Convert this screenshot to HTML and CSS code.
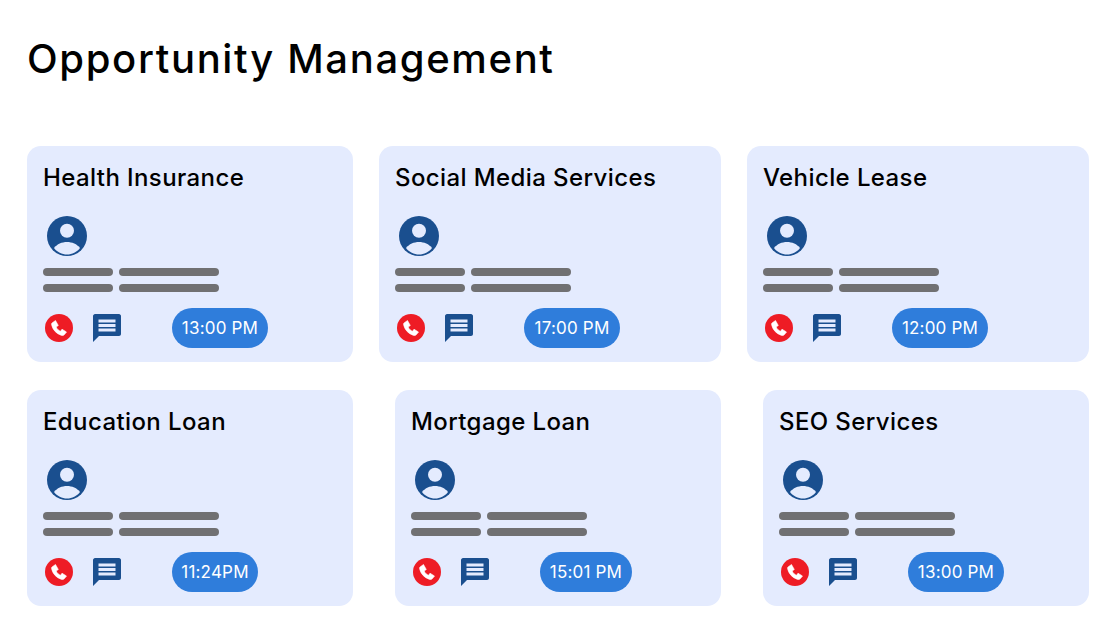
FILE: index.html
```html
<!DOCTYPE html>
<html lang="en">
<head>
<meta charset="utf-8">
<title>Opportunity Management</title>
<link rel="stylesheet" href="styles.css">
</head>
<body>
<svg class="defs" width="0" height="0" aria-hidden="true">
  <symbol id="avatar" viewBox="0 0 40 40">
    <circle cx="20" cy="20" r="20" fill="#1a4f8f"/>
    <circle cx="20" cy="14.700" r="7" fill="#e4ebfe"/>
    <path d="M7 32C10 28 15 26 20 26s10 2 13 6C30 36 25 38.500 20 38.500S10 36 7 32Z" fill="#e4ebfe"/>
  </symbol>
  <symbol id="phone" viewBox="0 0 28 28">
    <circle cx="14" cy="14" r="14" fill="#ee1c25"/>
    <path d="M7 9 10.500 6.500 13.300 11.500 11.200 13C12 15 13.500 16.500 15.500 17.300L17 15.200 21.500 18 19.500 20.500C18.500 21.800 17.300 21.600 16 21.200 11.500 19.800 8 16 6.800 11.500 6.500 10.500 6.300 9.700 7 9Z" fill="#fff" stroke="#fff" stroke-width=".6" stroke-linejoin="round"/>
  </symbol>
  <symbol id="chat" viewBox="0 0 28 28">
    <path d="M2 0h24c1 0 2 1 2 2v18c0 1-1 2-2 2H6l-6 6V2C0 1 1 0 2 0Z" fill="#1a4f8f"/>
    <path d="M5.500 5.500h17v3h-17zM5.500 10h17v3h-17zM5.500 14.500h17v3h-17z" fill="#e4ebfe"/>
  </symbol>
</svg>
<main class="page">
  <h1 class="heading">Opportunity Management</h1>
  <div class="row">
    <article class="card">
      <h2 class="card-title">Health Insurance</h2>
      <svg class="avatar"><use href="#avatar"/></svg>
      <div class="lines"><span class="bar short"></span><span class="bar long"></span><span class="bar short"></span><span class="bar long"></span></div>
      <div class="actions"><svg class="phone"><use href="#phone"/></svg><svg class="chat"><use href="#chat"/></svg><span class="time">13:00 PM</span></div>
    </article>
    <article class="card wide">
      <h2 class="card-title">Social Media Services</h2>
      <svg class="avatar"><use href="#avatar"/></svg>
      <div class="lines"><span class="bar short"></span><span class="bar long"></span><span class="bar short"></span><span class="bar long"></span></div>
      <div class="actions"><svg class="phone"><use href="#phone"/></svg><svg class="chat"><use href="#chat"/></svg><span class="time">17:00 PM</span></div>
    </article>
    <article class="card wide">
      <h2 class="card-title">Vehicle Lease</h2>
      <svg class="avatar"><use href="#avatar"/></svg>
      <div class="lines"><span class="bar short"></span><span class="bar long"></span><span class="bar short"></span><span class="bar long"></span></div>
      <div class="actions"><svg class="phone"><use href="#phone"/></svg><svg class="chat"><use href="#chat"/></svg><span class="time">12:00 PM</span></div>
    </article>
  </div>
  <div class="row">
    <article class="card">
      <h2 class="card-title">Education Loan</h2>
      <svg class="avatar"><use href="#avatar"/></svg>
      <div class="lines"><span class="bar short"></span><span class="bar long"></span><span class="bar short"></span><span class="bar long"></span></div>
      <div class="actions"><svg class="phone"><use href="#phone"/></svg><svg class="chat"><use href="#chat"/></svg><span class="time narrow">11:24PM</span></div>
    </article>
    <article class="card">
      <h2 class="card-title">Mortgage Loan</h2>
      <svg class="avatar"><use href="#avatar"/></svg>
      <div class="lines"><span class="bar short"></span><span class="bar long"></span><span class="bar short"></span><span class="bar long"></span></div>
      <div class="actions"><svg class="phone"><use href="#phone"/></svg><svg class="chat"><use href="#chat"/></svg><span class="time mid">15:01 PM</span></div>
    </article>
    <article class="card">
      <h2 class="card-title">SEO Services</h2>
      <svg class="avatar"><use href="#avatar"/></svg>
      <div class="lines"><span class="bar short"></span><span class="bar long"></span><span class="bar short"></span><span class="bar long"></span></div>
      <div class="actions"><svg class="phone"><use href="#phone"/></svg><svg class="chat"><use href="#chat"/></svg><span class="time">13:00 PM</span></div>
    </article>
  </div>
</main>
</body>
</html>
```
FILE: styles.css
```css
* { box-sizing: border-box; }
html, body { margin: 0; background: #fff; }
body { font-family: Inter, "Open Sans", "Liberation Sans", sans-serif; color: #000; overflow: hidden; }
.defs { display: block; height: 0; }
.page { width: 1110px; height: 634px; padding: 32px 21px 0 27px; display: flex; flex-direction: column; }
.heading { margin: 0 0 60px; height: 54px; font-size: 40px; line-height: 54px; font-weight: 500; letter-spacing: 1.650px; white-space: nowrap; }
.row { display: flex; justify-content: space-between; margin-bottom: 28px; }
.card { width: 326px; height: 216px; padding: 16px 16px 0; background: #e4ebfe; border-radius: 14px; display: flex; flex-direction: column; align-items: flex-start; }
.card.wide { width: 342px; }
.card-title { margin: 0 0 22px; font-size: 24px; line-height: 32px; font-weight: 500; letter-spacing: 0.400px; }
.avatar { width: 40px; height: 40px; margin: 0 0 12px 4px; display: block; flex: none; }
.lines { display: grid; grid-template-columns: 70px 100px; gap: 8px 6px; }
.bar { height: 8px; border-radius: 4px; background: #707072; }
.actions { display: flex; align-items: center; margin-top: 16px; height: 40px; padding-left: 2px; }
.phone, .chat { width: 28px; height: 28px; display: block; flex: none; }
.chat { margin-left: 20px; }
.time { margin-left: 51px; width: 96px; height: 40px; border-radius: 20px; background: #2f7ddb; color: #fff; font-size: 17px; line-height: 40px; text-align: center; letter-spacing: 0.200px; }
.time.narrow { width: 86px; }
.time.mid { width: 92px; }
```
